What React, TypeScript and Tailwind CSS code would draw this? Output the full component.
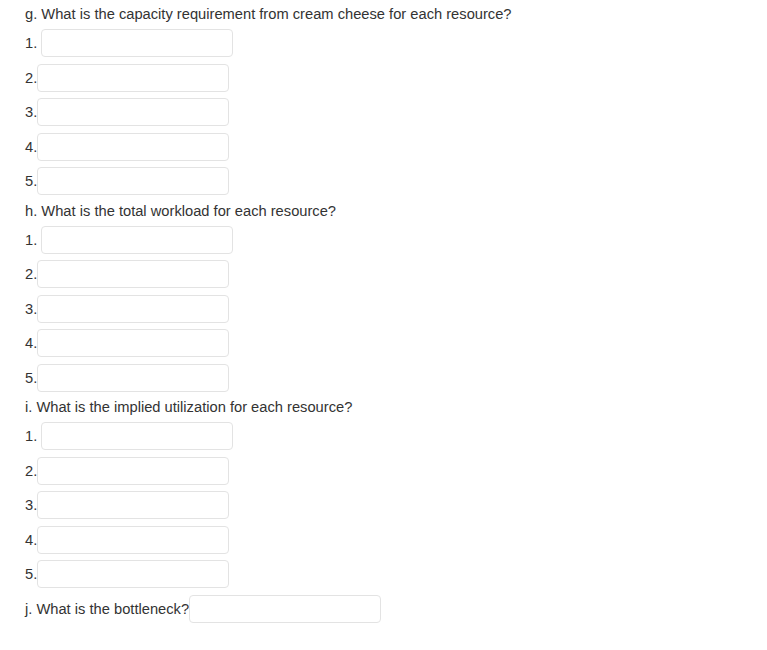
const SECTIONS = [
  { title: "g. What is the capacity requirement from cream cheese for each resource?" },
  { title: "h. What is the total workload for each resource?" },
  { title: "i. What is the implied utilization for each resource?" },
];

function Box({ className = "" }: { className?: string }) {
  return (
    <input
      type="text"
      className={`h-[28px] w-[192px] rounded-[4px] border border-[#e3e3e3] bg-white outline-none ${className}`}
    />
  );
}

export default function App() {
  return (
    <div className="min-h-[650px] bg-white pl-[25px] pt-[2px] text-[14.7px] text-[#333] font-['Liberation_Sans',Arial,sans-serif]">
      {SECTIONS.map((s) => (
        <div key={s.title}>
          <div className="h-[24px] leading-[24px]">{s.title}</div>
          {[1, 2, 3, 4, 5].map((n) => (
            <div key={n} className="flex h-[34.5px] items-center">
              <span>{n}.</span>
              <Box className={n === 1 ? "ml-[4px]" : ""} />
            </div>
          ))}
        </div>
      ))}
      <div className="flex h-[34.5px] items-center">
        <span>j. What is the bottleneck?</span>
        <Box className="w-[191px]" />
      </div>
    </div>
  );
}
